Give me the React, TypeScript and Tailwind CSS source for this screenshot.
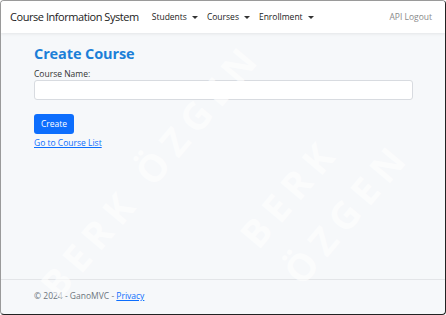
const Caret = () => (
  <span className="ml-[5px] inline-block h-0 w-0 border-x-[3px] border-t-[3px] border-x-transparent border-t-[#333] align-middle" />
);

const NavItem = ({ label }: { label: string }) => (
  <a className="flex items-center text-[8.5px] text-[#222]">
    {label}
    <Caret />
  </a>
);

export default function App() {
  return (
    <div
      className="relative flex h-[315px] w-[446px] flex-col overflow-hidden rounded-[4px] border border-[#9a9a9a] border-r-[#222] border-b-[#222] bg-[#f6f8fa]"
      style={{ fontFamily: '"Open Sans", "Noto Sans", sans-serif' }}
    >
      {/* navbar */}
      <nav className="flex h-[32px] items-center bg-white px-[9px] shadow-[0_1px_3px_rgba(0,0,0,0.08)]">
        <span className="text-[11px] tracking-[-0.45px] text-[#222]">Course Information System</span>
        <div className="ml-[13px] flex gap-[9px]">
          <NavItem label="Students" />
          <NavItem label="Courses" />
          <NavItem label="Enrollment" />
        </div>
        <a className="ml-auto mr-[4px] text-[8.5px] text-[#8a8a8a]">API Logout</a>
      </nav>

      {/* main */}
      <main className="flex-1 px-[33px] pt-[11px]">
        <h1 className="text-[14.5px] font-bold leading-[20px] tracking-[-0.1px] text-[#1b7fd8]">Create Course</h1>
        <div className="mt-[4px]">
          <label className="block text-[8.5px] leading-[12px] text-[#333]">Course Name:</label>
          <input className="block h-[20px] w-[379px] rounded-[3px] border border-[#d8dbe0] bg-white" />
        </div>
        <button className="mt-[14px] h-[20px] rounded-[3px] bg-[#0d6efd] px-[7px] text-[8.5px] text-white">Create</button>
        <div className="mt-[1px] leading-[11px]">
          <a className="text-[8.5px] leading-[11px] text-[#0d6efd] underline">Go to Course List</a>
        </div>
      </main>

      {/* footer */}
      <footer className="h-[35px] border-t border-[#e3e5e8] px-[33px] pt-[10px] text-[8.5px] text-[#6c757d]">
        © 2024 - GanoMVC - <a className="text-[#0d6efd] underline">Privacy</a>
      </footer>

      {/* watermark */}
      <div className="pointer-events-none absolute inset-0 select-none text-[38px] font-bold tracking-[8px] text-white/60">
        <span className="absolute left-[-10px] top-[140px] -rotate-[50deg]">BERK ÖZGEN</span>
        <span className="absolute left-[230px] top-[120px] -rotate-[50deg]">BERK ÖZGEN</span>
      </div>
    </div>
  );
}
